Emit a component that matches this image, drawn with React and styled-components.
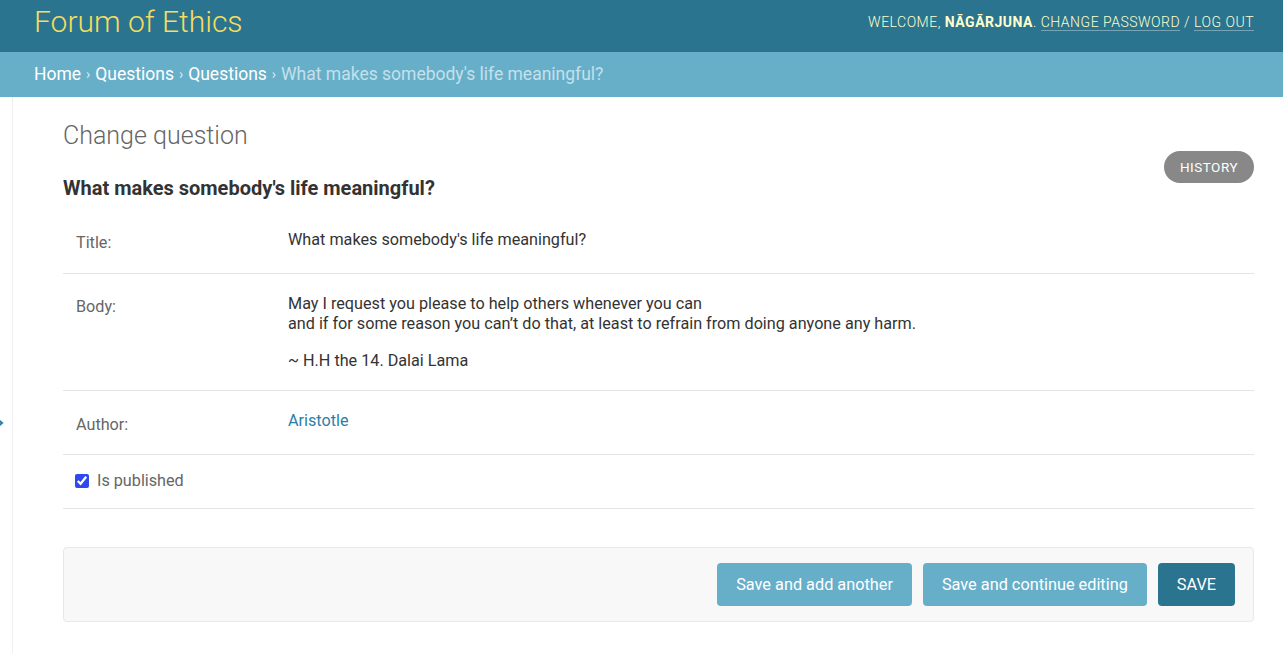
import React from 'react';
import styled, { createGlobalStyle } from 'styled-components';

const GlobalStyle = createGlobalStyle`
    html, body {
        margin: 0;
        padding: 0;
        background: #fff;
        font-family: Roboto, "Liberation Sans", sans-serif;
        color: #333;
    }
    * { box-sizing: border-box; }
`

const Header = styled.header`
    height: 52px;
    background: #2a7490;
    display: flex;
    align-items: center;
    justify-content: space-between;
    padding: 0 29px 0 34px;
`

const Brand = styled.h1`
    margin: 0;
    font-weight: 300;
    font-size: 30px;
    color: #f5dd5d;
    line-height: 1;
    padding-bottom: 8px;
`

const UserTools = styled.div`
    font-size: 14px;
    font-weight: 300;
    letter-spacing: 0.5px;
    text-transform: uppercase;
    color: #ffc;
    padding-bottom: 8px;
    strong {
        font-weight: 700;
        color: #ffc;
    }
    a {
        color: #ffc;
        text-decoration: none;
        border-bottom: 1px solid rgba(255, 255, 255, 0.35);
    }
`

const Breadcrumbs = styled.nav`
    height: 45px;
    background: #67afc9;
    display: flex;
    align-items: center;
    padding: 0 34px 2px;
    font-size: 17.5px;
    color: #c4e0eb;
    a {
        color: #fff;
        text-decoration: none;
    }
`

const Sep = styled.span`
    margin: 0 5px;
    font-size: 14px;
    color: #d6ebf3;
`

const Main = styled.div`
    display: flex;
    min-height: 556px;
`

const SideToggle = styled.div`
    width: 13px;
    border-right: 1px solid #eee;
    display: flex;
    align-items: center;
    padding-top: 95px;
    flex-shrink: 0;
    svg {
        margin-left: -5px;
    }
`

const Content = styled.div`
    flex: 1;
    padding: 20px 29px 30px 50px;
`

const PageTitle = styled.h1`
    margin: 4px 0 0;
    font-weight: 300;
    font-size: 25px;
    color: #666;
`

const TitleRow = styled.div`
    display: flex;
    justify-content: space-between;
    align-items: flex-start;
    margin-top: 2px;
`

const Heading = styled.h2`
    margin: 24px 0 10px;
    font-size: 20px;
    font-weight: 700;
    color: #333;
`

const HistoryButton = styled.a`
    display: inline-flex;
    align-items: center;
    height: 32px;
    margin-top: -1px;
    padding: 0 16px;
    border-radius: 16px;
    background: #888;
    color: #fff;
    font-size: 13.5px;
    letter-spacing: 0.5px;
    text-transform: uppercase;
`

const Field = styled.div`
    display: flex;
    border-bottom: 1px solid #e4e4e4;
    padding: ${p => p.$pad || '20px 13px 20px'};
    font-size: 16.2px;
    line-height: 20px;
`

const Label = styled.div`
    width: 212px;
    color: #666;
    padding-top: ${p => p.$offset || '3px'};
    flex-shrink: 0;
`

const Value = styled.div`
    color: #333;
    p {
        margin: 0 0 17px;
    }
    p:last-child {
        margin: 0;
    }
`

const Link = styled.a`
    color: #2a7fa8;
    text-decoration: none;
`

const CheckLabel = styled.label`
    display: flex;
    align-items: center;
    gap: 8px;
    color: #666;
    input {
        width: 14px;
        height: 14px;
        margin: 0 0 0 -1px;
        accent-color: #2f49ef;
    }
`

const SubmitRow = styled.div`
    margin-top: 38px;
    background: #f8f8f8;
    border: 1px solid #e8e8e8;
    border-radius: 4px;
    padding: 15px 18px;
    display: flex;
    justify-content: flex-end;
    gap: 11px;
`

const Button = styled.button`
    height: 43px;
    padding: 0 19px;
    border: none;
    border-radius: 4px;
    background: ${p => (p.$primary ? '#2a7490' : '#67afc9')};
    color: #fff;
    font-family: Roboto, "Liberation Sans", sans-serif;
    font-size: 16.3px;
    text-transform: ${p => (p.$primary ? 'uppercase' : 'none')};
    cursor: pointer;
`

const App = () => {
    return (
        <>
            <GlobalStyle />
            <Header>
                <Brand>Forum of Ethics</Brand>
                <UserTools>
                    Welcome, <strong>Nāgārjuna</strong>. <a href="#">Change password</a> / <a href="#">Log out</a>
                </UserTools>
            </Header>
            <Breadcrumbs>
                <a href="#">Home</a><Sep>›</Sep>
                <a href="#">Questions</a><Sep>›</Sep>
                <a href="#">Questions</a><Sep>›</Sep>
                What makes somebody's life meaningful?
            </Breadcrumbs>
            <Main>
                <SideToggle>
                    <svg width="10" height="12" viewBox="0 0 10 12">
                        <path d="M2 2 L7 6 L2 10" fill="none" stroke="#2a7fa8" strokeWidth="2" />
                    </svg>
                </SideToggle>
                <Content>
                    <PageTitle>Change question</PageTitle>
                    <TitleRow>
                        <Heading>What makes somebody's life meaningful?</Heading>
                        <HistoryButton>History</HistoryButton>
                    </TitleRow>
                    <Field>
                        <Label>Title:</Label>
                        <Value>What makes somebody's life meaningful?</Value>
                    </Field>
                    <Field $pad="20px 13px 19px">
                        <Label>Body:</Label>
                        <Value>
                            <p>May I request you please to help others whenever you can<br />
                            and if for some reason you can’t do that, at least to refrain from doing anyone any harm.</p>
                            <p>~ H.H the 14. Dalai Lama</p>
                        </Value>
                    </Field>
                    <Field $pad="20px 13px 19px">
                        <Label $offset="4px">Author:</Label>
                        <Value><Link href="#">Aristotle</Link></Value>
                    </Field>
                    <Field $pad="16px 13px 17px">
                        <CheckLabel>
                            <input type="checkbox" defaultChecked />
                            Is published
                        </CheckLabel>
                    </Field>
                    <SubmitRow>
                        <Button>Save and add another</Button>
                        <Button>Save and continue editing</Button>
                        <Button $primary>Save</Button>
                    </SubmitRow>
                </Content>
            </Main>
        </>
    );
}

export default App;
